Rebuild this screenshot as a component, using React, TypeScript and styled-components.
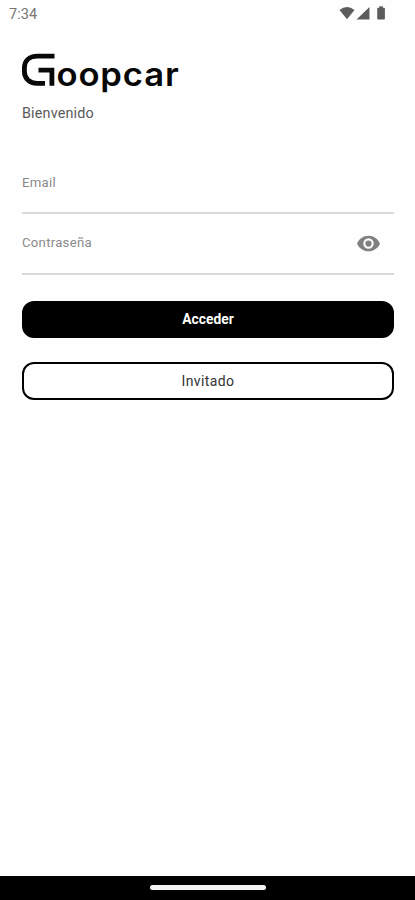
import React from "react";
import styled, { createGlobalStyle } from "styled-components";

const GlobalStyle = createGlobalStyle`
  * { box-sizing: border-box; }
  body { margin: 0; background: #fefefe; font-family: Roboto, "Liberation Sans", sans-serif; }
`;

const Screen = styled.div`
  display: flex;
  flex-direction: column;
  height: 900px;
  overflow: hidden;
`;

const StatusBar = styled.header`
  display: flex;
  align-items: center;
  justify-content: space-between;
  height: 28px;
  padding: 0 28px 0 9px;
  color: #757575;
  font-size: 14.5px;
  letter-spacing: 0.1px;
`;

const StatusIcons = styled.svg`
  display: block;
  width: 48px;
  height: 16px;
  margin-top: -2px;
  fill: #5c5c5c;
`;

const Main = styled.main`
  display: flex;
  flex: 1;
  flex-direction: column;
  padding: 22px 21px 0 22px;
`;

const Logo = styled.svg`
  display: block;
  width: 160px;
  height: 46px;
  fill: #080808;
  font: 600 32.5px Inter, sans-serif;
  letter-spacing: 0.8px;
`;

const LogoStroke = styled.path`
  fill: none;
  stroke: #080808;
  stroke-width: 4.8px;
`;

const Welcome = styled.p`
  margin: 9px 0 51px;
  color: #5a5a5a;
  font-size: 14.4px;
  line-height: 18px;
  letter-spacing: 0.15px;
`;

const Field = styled.label<{ $height: number }>`
  display: flex;
  align-items: flex-start;
  justify-content: space-between;
  height: ${({ $height }) => $height}px;
  border-bottom: 2px solid #dadada;
  padding-right: 13px;
`;

const FieldName = styled.span`
  color: #8a8a8a;
  font-size: 13.2px;
  line-height: 18px;
  letter-spacing: 0.25px;
`;

const Eye = styled.svg`
  width: 25px;
  height: 25px;
  margin-top: -3px;
  fill: #808080;
`;

const PasswordGap = styled.div`
  height: 20px;
`;

const Actions = styled.div`
  display: flex;
  flex-direction: column;
  gap: 24px;
  margin-top: 26px;
`;

const Button = styled.button<{ $filled?: boolean }>`
  height: 37.5px;
  padding: 0;
  border: 2px solid #000;
  border-radius: 12px;
  background: ${({ $filled }) => ($filled ? "#000" : "#fff")};
  color: ${({ $filled }) => ($filled ? "#fff" : "#333")};
  font: ${({ $filled }) => ($filled ? "700 13.8px" : "400 14px")} Roboto, sans-serif;
  letter-spacing: ${({ $filled }) => ($filled ? 0 : 0.4)}px;
`;

const NavigationBar = styled.footer`
  display: flex;
  justify-content: center;
  height: 24px;
  padding-top: 9px;
  background: #000;
`;

const HomeHandle = styled.div`
  width: 116px;
  height: 5px;
  border-radius: 3px;
  background: #f4f4f4;
`;

export default function App() {
  return (
    <Screen>
      <GlobalStyle />
      <StatusBar>
        <span>7:34</span>
        <StatusIcons viewBox="0 0 48 16" aria-hidden="true">
          <path d="M.5 5Q8-1.2 15.5 5L8 14.3Z" />
          <path d="M30.5 2v12.5h-13Z" />
          <path d="M40.3 1.2h3.5v1.5h1.4q.7 0 .7.7v10.2q0 .9-.9.9h-5.9q-.9 0-.9-.9V3.4q0-.7.7-.7h1.4Z" />
        </StatusIcons>
      </StatusBar>
      <Main>
        <Logo viewBox="0 0 160 46" role="img" aria-label="Goopcar">
          <LogoStroke d="M32.5 6.2H15.5C7 6.2 2.4 11 2.4 18V21.5C2.4 28.5 7.5 33.3 15 33.3H23" />
          <LogoStroke d="M16.5 20.2H29.9V35.7" />
          <text x="34.5" y="35.6" textLength="123" lengthAdjust="spacingAndGlyphs">oopcar</text>
        </Logo>
        <Welcome>Bienvenido</Welcome>
        <Field $height={40}>
          <FieldName>Email</FieldName>
        </Field>
        <PasswordGap />
        <Field $height={40.5}>
          <FieldName>Contraseña</FieldName>
          <Eye viewBox="0 0 24 24" aria-hidden="true">
            <path d="M12 4.5C7 4.5 2.73 7.61 1 12c1.73 4.39 6 7.5 11 7.5s9.27-3.11 11-7.5c-1.73-4.39-6-7.5-11-7.5M12 17a5 5 0 1 1 0-10 5 5 0 0 1 0 10m0-8a3 3 0 1 0 0 6 3 3 0 0 0 0-6" />
          </Eye>
        </Field>
        <Actions>
          <Button $filled>Acceder</Button>
          <Button>Invitado</Button>
        </Actions>
      </Main>
      <NavigationBar>
        <HomeHandle />
      </NavigationBar>
    </Screen>
  );
}
